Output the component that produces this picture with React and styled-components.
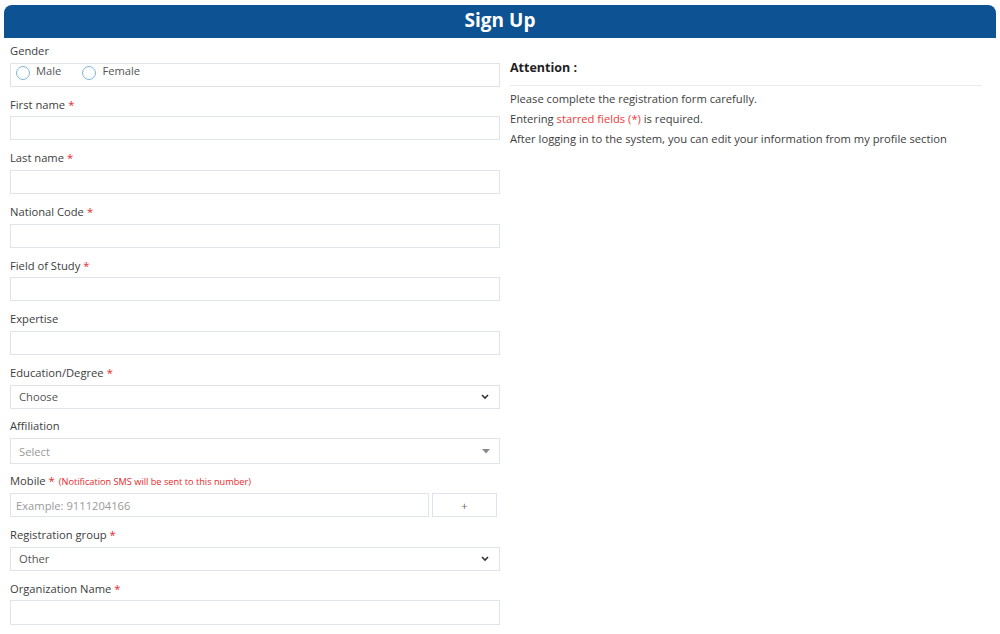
import { createGlobalStyle } from "styled-components";
import styled from "styled-components";

const GlobalStyle = createGlobalStyle`
  body {
    margin: 0;
    background: #ffffff;
    font-family: "Open Sans", "Liberation Sans", sans-serif;
    color: #3d3d3d;
  }
  * {
    box-sizing: border-box;
  }
`;

const Page = styled.div`
  width: 1000px;
  padding: 5px 4px 0 4px;
`;

const Header = styled.div`
  height: 33px;
  background: #0d5394;
  border-radius: 8px 8px 0 0;
  display: flex;
  align-items: center;
  justify-content: center;
`;

const Title = styled.h1`
  margin: 0 0 2px 0;
  color: #ffffff;
  font-size: 19px;
  font-weight: 700;
  line-height: 1;
`;

const Body = styled.div`
  display: flex;
  gap: 10px;
  padding: 4px 14px 0 6px;
`;

const FormColumn = styled.div`
  width: 490px;
  display: flex;
  flex-direction: column;
`;

const Field = styled.div`
  display: flex;
  flex-direction: column;
  margin-bottom: ${(p) => (p.$tight ? "8px" : "8.85px")};
`;

const Label = styled.label`
  font-size: 11.2px;
  line-height: 18px;
  height: 18px;
  color: #3d3d3d;
  margin-bottom: 2.8px;
`;

const Star = styled.span`
  color: #e8282b;
  margin-left: 3px;
`;

const Note = styled.span`
  color: #e8282b;
  font-size: 9.2px;
  margin-left: 4px;
`;

const TextBox = styled.div`
  height: ${(p) => p.$h || 24}px;
  border: 1px solid #dfe3ea;
  background: #fff;
  display: flex;
  align-items: center;
  padding: 0 ${(p) => (p.$select ? "9px" : "5px")} 0 ${(p) => (p.$select ? "8px" : "5px")};
  justify-content: space-between;
  font-size: 11.2px;
  color: ${(p) => (p.$placeholder ? "#9a9a9a" : "#555")};
  flex: ${(p) => (p.$grow ? 1 : "none")};
`;

const RadioGroup = styled.div`
  height: 24px;
  border: 1px solid #dfe3ea;
  display: flex;
  align-items: flex-start;
  padding: 0 0 0 5px;
  gap: 21px;
`;

const RadioOption = styled.div`
  display: flex;
  align-items: flex-start;
  font-size: 11.2px;
  color: #555;
  gap: 6px;
  line-height: 14px;
`;

const RadioCircle = styled.span`
  width: 14px;
  height: 14px;
  border-radius: 50%;
  border: 1px solid #7fb5dc;
  margin-top: 2.5px;
  background: #fff;
`;

const MobileRow = styled.div`
  display: flex;
  gap: 3px;
  padding-right: 3px;
`;

const CodeBox = styled.div`
  width: 65px;
  height: 24px;
  border: 1px solid #dfe3ea;
  display: flex;
  align-items: center;
  justify-content: center;
  font-size: 11px;
  color: #666;
`;

const InfoColumn = styled.div`
  flex: 1;
  padding-top: 17px;
`;

const InfoTitle = styled.div`
  font-size: 12.5px;
  font-weight: 700;
  color: #222;
  padding-bottom: 9px;
  border-bottom: 1px solid #ececec;
  margin-bottom: 3px;
`;

const InfoLine = styled.p`
  margin: 0;
  font-size: 11.2px;
  line-height: 20px;
  color: #3d3d3d;
`;

const Red = styled.span`
  color: #f03a3a;
`;

const Chevron = () => (
  <svg width="10" height="7" viewBox="0 0 10 7">
    <path d="M2 2 L5 5 L8 2" fill="none" stroke="#333" strokeWidth="1.6" />
  </svg>
);

const Caret = () => (
  <svg width="8" height="5" viewBox="0 0 8 5">
    <path d="M0 0 L8 0 L4 4.5 Z" fill="#888" />
  </svg>
);

const fields = [
  { label: "First name", required: true },
  { label: "Last name", required: true },
  { label: "National Code", required: true },
  { label: "Field of Study", required: true },
  { label: "Expertise" },
];

const App = () => {
  return (
    <Page>
      <GlobalStyle />
      <Header>
        <Title>Sign Up</Title>
      </Header>
      <Body>
        <FormColumn>
          <Field>
            <Label>Gender</Label>
            <RadioGroup>
              <RadioOption>
                <RadioCircle />
                Male
              </RadioOption>
              <RadioOption>
                <RadioCircle />
                Female
              </RadioOption>
            </RadioGroup>
          </Field>

          {fields.map((f) => (
            <Field key={f.label}>
              <Label>
                {f.label}
                {f.required && <Star>*</Star>}
              </Label>
              <TextBox />
            </Field>
          ))}

          <Field>
            <Label>
              Education/Degree<Star>*</Star>
            </Label>
            <TextBox $select>
              Choose
              <Chevron />
            </TextBox>
          </Field>

          <Field $tight>
            <Label>Affiliation</Label>
            <TextBox $select $placeholder $h={26}>
              Select
              <Caret />
            </TextBox>
          </Field>

          <Field>
            <Label>
              Mobile<Star>*</Star>
              <Note>(Notification SMS will be sent to this number)</Note>
            </Label>
            <MobileRow>
              <TextBox $placeholder $grow>
                Example: 9111204166
              </TextBox>
              <CodeBox>+</CodeBox>
            </MobileRow>
          </Field>

          <Field>
            <Label>
              Registration group<Star>*</Star>
            </Label>
            <TextBox $select>
              Other
              <Chevron />
            </TextBox>
          </Field>

          <Field>
            <Label>
              Organization Name<Star>*</Star>
            </Label>
            <TextBox $h={25} />
          </Field>
        </FormColumn>

        <InfoColumn>
          <InfoTitle>Attention :</InfoTitle>
          <InfoLine>Please complete the registration form carefully.</InfoLine>
          <InfoLine>
            Entering <Red>starred fields (*)</Red> is required.
          </InfoLine>
          <InfoLine>
            After logging in to the system, you can edit your information from my profile section
          </InfoLine>
        </InfoColumn>
      </Body>
    </Page>
  );
};

export default App;
